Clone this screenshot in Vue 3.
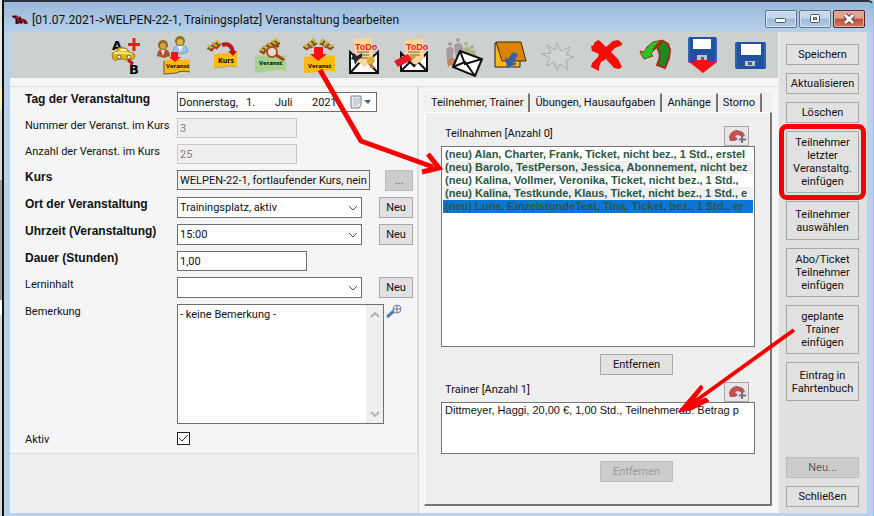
<script setup>
import { ref } from 'vue'

const kurs = ref('WELPEN-22-1, fortlaufender Kurs, nein')
const bemerkung = ref('- keine Bemerkung -')
const aktiv = ref(true)
const activeTab = ref(0)
const selected = ref(4)

const tabs = ['Teilnehmer, Trainer', 'Übungen, Hausaufgaben', 'Anhänge', 'Storno']

const teilnahmen = [
  '(neu) Alan, Charter, Frank, Ticket, nicht bez., 1 Std., erstel',
  '(neu) Barolo, TestPerson, Jessica, Abonnement, nicht bez',
  '(neu) Kalina, Vollmer, Veronika, Ticket, nicht bez., 1 Std.,',
  '(neu) Kalina, Testkunde, Klaus, Ticket, nicht bez., 1 Std., e',
  '(neu) Luna, EinzelstundeTest, Tina, Ticket, bez., 1 Std., er'
]
const trainer = ['Dittmeyer, Haggi, 20,00 €, 1,00 Std., Teilnehmerab. Betrag p']

const topActions = [
  ['Speichern'],
  ['Aktualisieren'],
  ['Löschen'],
  ['Teilnehmer', 'letzter', 'Veranstaltg.', 'einfügen'],
  ['Teilnehmer', 'auswählen'],
  ['Abo/Ticket', 'Teilnehmer', 'einfügen'],
  ['geplante', 'Trainer', 'einfügen'],
  ['Eintrag in', 'Fahrtenbuch']
]
</script>

<template>
  <div class="desktop">
    <div class="behind"></div>
    <div class="window">
      <header class="titlebar">
        <svg class="app-icon" width="17" height="12" viewBox="0 0 17 12">
          <path d="M1 2l3-1 3 2 2-1v2l3 1 2 1 2 3-1 1h-3l-1-2-1 2H9L8 8l-1 2H3l2-3-2-3z" fill="#8d1d20" />
          <path d="M0 2l4 1-2 1zM4 5l2 4H4zM8 4l1 5H8zM12 6l2 3" fill="#300b10" stroke="#300b10" />
        </svg>
        <h1>[01.07.2021-&gt;WELPEN-22-1, Trainingsplatz] Veranstaltung bearbeiten</h1>
        <div class="caption-buttons">
          <button type="button" aria-label="Minimieren">
            <svg width="30" height="16" viewBox="0 0 30 16"><rect x="9.500" y="7.500" width="10" height="4" rx="1" fill="#fff" stroke="#4d5a6c" /></svg>
          </button>
          <button type="button" aria-label="Maximieren">
            <svg width="30" height="16" viewBox="0 0 30 16"><rect x="10.500" y="3.500" width="9" height="8" rx="1" fill="#fff" stroke="#4d5a6c" /><rect x="13.500" y="6.500" width="3" height="2" fill="#9bb5d2" stroke="#4d5a6c" /></svg>
          </button>
          <button type="button" class="close" aria-label="Fenster schließen">
            <svg width="30" height="16" viewBox="0 0 30 16"><path d="M11 4l8 8M19 4l-8 8" stroke="#5a3b40" stroke-width="5" /><path d="M11 4l8 8M19 4l-8 8" stroke="#fff" stroke-width="3" /></svg>
          </button>
        </div>
      </header>

      <div class="client">
        <div class="workspace">
          <nav class="toolbar" aria-label="Werkzeuge">
            <button type="button" aria-label="Fahrt von A nach B">
              <svg viewBox="0 0 48 46">
                <text x="10" y="18" class="ab">A</text>
                <path d="M32 6v13M26 12.500h12" stroke="#f11a1a" stroke-width="3" />
                <path d="M10 23q0-3 4-3l2-4q5-2 9 1l2 3q5 0 6 4l-1 2q-2 3-5 1-3 2-6 0h-4q-4 3-6 0z" fill="#e0b526" stroke="#9b7412" />
                <path d="M17 19l2-2h5l1 2z" fill="#fff4b4" />
                <path d="M12 21q8-1 18 1" stroke="#fae670" stroke-width="2" fill="none" />
                <circle cx="17" cy="25" r="2" fill="#f7efc0" stroke="#7c6420" /><circle cx="27" cy="25" r="2" fill="#f7efc0" stroke="#7c6420" />
                <path d="M26 28l4 3-1 2" stroke="#b51818" stroke-width="3" fill="none" />
                <text x="27" y="42" class="ab">B</text>
              </svg>
            </button>
            <button type="button" aria-label="Teilnehmer zur Veranstaltung">
              <svg viewBox="0 0 48 46">
                <path d="M7 24q0-7 6-7 7 0 7 7l-6 2z" fill="#a9532f" />
                <circle cx="13" cy="13" r="5" fill="#8d6b20" /><circle cx="13" cy="14" r="3" fill="#dba43c" />
                <path d="M11 18l2 6 2-6z" fill="#e8e4e0" />
                <path d="M23 20q0-7 7-7 8 0 8 7l-7 2z" fill="#9dc0ea" stroke="#7aa0d4" />
                <circle cx="30" cy="9" r="5" fill="#8d7322" /><circle cx="30" cy="10" r="3" fill="#e5b84b" />
                <path d="M28 14l2 6 3-6z" fill="#fff" />
                <path d="M14 28l13-1 6 1 7-1v13q-6-1-13 1l-13 1z" fill="#fdb913" />
                <path d="M14 29v13l12-1q5-3 14-1" fill="none" stroke="#605c38" />
                <path d="M21 20h7v5h3l-6 5-6-5h2z" fill="#fb1010" />
                <text x="16" y="36" class="tiny">Veranst</text>
              </svg>
            </button>
            <button type="button" aria-label="Gruppe zum Kurs">
              <svg viewBox="0 0 48 46">
                <path d="M10 15l5 3M14 12l6 4M18 10l4 4" stroke="#6e5a22" stroke-width="4" />
                <path d="M10 14l5 3M14 11l6 4M18 8l4 4" stroke="#dcb232" stroke-width="2" />
                <path d="M13 18l3-2M18 16l3-2" stroke="#c22727" stroke-width="2" />
                <path d="M16 22l12-1 11-1v15q-5-2-12 0l-11 1z" fill="#fdbb14" />
                <path d="M16 36l11-1q6-2 12 0" stroke="#b4a66e" fill="none" />
                <path d="M24 13q9-3 11 7" fill="none" stroke="#c31719" stroke-width="4" />
                <path d="M30 19h9l-4 5z" fill="#b80f12" />
                <text x="20" y="31" class="small">Kurs</text>
              </svg>
            </button>
            <button type="button" aria-label="Veranstaltung suchen">
              <svg viewBox="0 0 48 46">
                <path d="M9 23q12 1 31 0v16q-7-2-15 0l-16 2z" fill="#a9d18d" />
                <path d="M14 18l5 3M17 15l5 4M21 12l5 5M25 10l5 5M29 8l4 5" stroke="#6e5a22" stroke-width="4" />
                <path d="M14 17l4 2M17 14l5 3M21 11l5 3M25 9l5 3M29 7l4 3" stroke="#dcb232" stroke-width="2" />
                <path d="M16 21l3-1M30 15l3-1" stroke="#cb2b27" stroke-width="2" />
                <circle cx="26" cy="20" r="5" fill="#e8ddd0" stroke="#b34e20" stroke-width="2" />
                <path d="M30 23l8 5" stroke="#aa4219" stroke-width="3" />
                <text x="13" y="33" class="tiny">Veranst</text>
              </svg>
            </button>
            <button type="button" aria-label="Gruppen zur Veranstaltung">
              <svg viewBox="0 0 48 46">
                <path d="M10 25q14-2 31-1v16q-7-3-16 0l-15 1z" fill="#fdba12" />
                <path d="M10 14l4 3M14 11l5 4M18 8l4 5M39 14l-4 3M35 11l-5 4M30 8l-3 5" stroke="#6e5a22" stroke-width="4" />
                <path d="M10 13l4 3M14 10l5 4M18 7l4 4M39 13l-4 3M35 10l-5 4M30 7l-3 4" stroke="#dcb232" stroke-width="2" />
                <path d="M13 17l3-2M36 17l-3-2" stroke="#c22727" stroke-width="2" />
                <path d="M20 15h9v7h4l-9 7-8-7h4z" fill="#fb0f0f" />
                <text x="14" y="36" class="tiny">Veranst</text>
              </svg>
            </button>
            <button type="button" aria-label="ToDo bearbeiten">
              <svg viewBox="0 0 48 46">
                <path d="M8 20l14 13 14-13v21H8z" fill="#fff" stroke="#111" stroke-width="2" />
                <path d="M8 41l11-12M36 41L25 29" stroke="#111" stroke-width="2" />
                <path d="M12 7l18-1 1 22-8 7-11-8z" fill="#fad798" />
                <path d="M15 20h12M17 23h10M18 26h8" stroke="#6d6251" />
                <path d="M12 21l3 3 5-3v4l-4 3-3 5-1-5-3-1z" fill="#202736" />
                <path d="M25 26l6-2 2 5-3 5-5-3z" fill="#dbac36" /><path d="M29 32l5 4h-6z" fill="#d26b35" />
                <text x="13" y="18" class="todo">ToDo</text>
              </svg>
            </button>
            <button type="button" aria-label="ToDo abstempeln">
              <svg viewBox="0 0 48 46">
                <path d="M11 21l13 13 13-13v18H11z" fill="#fff" stroke="#111" stroke-width="2" />
                <path d="M11 39l10-10M37 39L27 29" stroke="#111" stroke-width="2" />
                <path d="M15 8l18-1 1 19-8 7-11-8z" fill="#fad798" />
                <path d="M18 20h12M20 23h10" stroke="#6d6251" />
                <path d="M18 24l5-2 3 3-5 4z" fill="#c89c3d" />
                <path d="M4 29l14-7 4 6-14 7z" fill="#e71924" />
                <text x="16" y="18" class="todo">ToDo</text>
              </svg>
            </button>
            <button type="button" aria-label="Nachricht an Gruppe">
              <svg viewBox="0 0 48 46">
                <g fill="#a99b9f"><circle cx="12" cy="12" r="2" /><path d="M8 17l3-2h3l2 3-1 5v6H9z" /><circle cx="20" cy="8" r="2" /><path d="M16 13l3-2h3l3 3-1 13h-6z" /></g>
                <g fill="#acb38a"><circle cx="28" cy="12" r="2" /><path d="M25 17l2-2h4l2 3-1 7h-7z" /><circle cx="34" cy="15" r="2" /><path d="M30 20l3-2h4l2 9h-9z" /></g>
                <path d="M9 28l5-2 5 2-2 6-4-1-3 2z" fill="#ca8157" />
                <path d="M22 19l22 8-7 17-22-9z" fill="#fff" stroke="#111" stroke-width="2" />
                <path d="M22 19l5 13 17-5M15 35l12-5 10 14" fill="none" stroke="#111" stroke-width="2" />
              </svg>
            </button>
            <button type="button" aria-label="Auswahl übernehmen">
              <svg viewBox="0 0 48 46">
                <path d="M9 11h25v24H9z" fill="#fdbc14" stroke="#26221b" />
                <path d="M10 10h25l5 19H16z" fill="#dc8400" stroke="#3d2b10" />
                <path d="M27 20l5 2-4 8 3 2-10 4-2-11 3 2z" fill="#385fa9" />
              </svg>
            </button>
            <button type="button" aria-label="Neu">
              <svg viewBox="0 0 48 46">
                <path d="M23 11l4 8 9-4-4 8 8 2-8 3 2 10-8-6-3 6-3-8-8 4 4-8-8-4 9-1-4-8 8 5z" fill="#d0d4d3" stroke="#a8abab" />
              </svg>
            </button>
            <button type="button" aria-label="Löschen">
              <svg viewBox="0 0 48 46">
                <path d="M9 14l3-1v-2l4-3 2 1 6 6 7-6 5-1 4 3v2l-7 3-4 4 7 7 4 8-3 2-5-1-8-9-5 3-2 5v4l-8-4 1-4 6-6 1-3-7-3z" fill="#fb0905" />
              </svg>
            </button>
            <button type="button" aria-label="Rückgängig">
              <svg viewBox="0 0 48 46">
                <path d="M10 19l4 1 3-5 6-5 10-2-3 5-7 6-2 3 2 2-9 3-3-5z" fill="#18ce1b" stroke="#a62c16" stroke-width="1" />
                <path d="M27 15l6-6 5 3 2 6-1 8-4 10-8-3q4-8 2-13z" fill="#188b22" stroke="#a62c16" stroke-width="2" />
                <path d="M32 9l-4 3-5 6" fill="none" stroke="#a62c16" stroke-width="2" />
              </svg>
            </button>
            <button type="button" aria-label="Speichern und schließen">
              <svg viewBox="0 0 48 46">
                <rect x="10" y="5" width="29" height="26" rx="2" fill="#21519f" />
                <path d="M11 6v24M38 6v24" stroke="#397ac1" />
                <path d="M15 7h18v10H15z" fill="#fff" />
                <path d="M19 23h10v6H19z" fill="#b9c5d1" /><path d="M23 25h3v3h-3z" fill="#476583" />
                <path d="M18 28h12v2h9L25 41 11 30h7z" fill="#fb100c" />
              </svg>
            </button>
            <button type="button" aria-label="Speichern">
              <svg viewBox="0 0 48 46">
                <rect x="9" y="10" width="31" height="27" rx="2" fill="#21519f" />
                <path d="M10 12v23M39 12v23" stroke="#397ac1" />
                <path d="M15 12h20v11H15z" fill="#fff" />
                <path d="M19 29h10v5H19z" fill="#b9c5d1" /><path d="M22 30h4v3h-4z" fill="#476583" />
              </svg>
            </button>
          </nav>

          <div class="columns">
            <section class="details">
              <form class="form" @submit.prevent>
                <div class="row">
                  <label for="tag" class="strong">Tag der Veranstaltung</label>
                  <div class="date">
                    <span class="weekday">Donnerstag,</span>
                    <input id="tag" class="day" value="1." />
                    <input class="month" value="Juli" aria-label="Monat" />
                    <input class="year" value="2021" aria-label="Jahr" />
                    <button type="button" aria-label="Kalender öffnen">
                      <svg width="21" height="14" viewBox="0 0 21 14">
                        <path d="M1 1h10v9l-2 3H1z" fill="#e9eef4" stroke="#7b7b7b" />
                        <path d="M3 4h7M3 6h7M3 8h7M3 10h5" stroke="#a9b7c7" />
                        <path d="M14 5h7l-3 4z" fill="#43617f" />
                      </svg>
                    </button>
                  </div>
                </div>
                <div class="row">
                  <label for="nummer">Nummer der Veranst. im Kurs</label>
                  <input id="nummer" class="box short" value="3" disabled />
                </div>
                <div class="row">
                  <label for="anzahl">Anzahl der Veranst. im Kurs</label>
                  <input id="anzahl" class="box short" value="25" disabled />
                </div>
                <div class="row">
                  <label for="kurs" class="strong">Kurs</label>
                  <input id="kurs" v-model="kurs" class="box course" readonly />
                  <button type="button" class="btn more" disabled aria-label="Kurs wählen">...</button>
                </div>
                <div class="row">
                  <label for="ort" class="strong">Ort der Veranstaltung</label>
                  <div class="combo">
                    <select id="ort"><option>Trainingsplatz, aktiv</option></select>
                    <svg width="10" height="6" viewBox="0 0 10 6"><path d="M1 1l4 4 4-4" /></svg>
                  </div>
                  <button type="button" class="btn new">Neu</button>
                </div>
                <div class="row">
                  <label for="zeit" class="strong">Uhrzeit (Veranstaltung)</label>
                  <div class="combo">
                    <select id="zeit"><option>15:00</option></select>
                    <svg width="10" height="6" viewBox="0 0 10 6"><path d="M1 1l4 4 4-4" /></svg>
                  </div>
                  <button type="button" class="btn new">Neu</button>
                </div>
                <div class="row">
                  <label for="dauer" class="strong">Dauer (Stunden)</label>
                  <input id="dauer" class="box duration" value="1,00" />
                </div>
                <div class="row">
                  <label for="inhalt">Lerninhalt</label>
                  <div class="combo">
                    <select id="inhalt"><option></option></select>
                    <svg width="10" height="6" viewBox="0 0 10 6"><path d="M1 1l4 4 4-4" /></svg>
                  </div>
                  <button type="button" class="btn new">Neu</button>
                </div>
                <div class="row">
                  <label for="bemerkung">Bemerkung</label>
                  <div class="note">
                    <textarea id="bemerkung" v-model="bemerkung"></textarea>
                    <div class="scroll">
                      <svg width="10" height="6" viewBox="0 0 10 6"><path d="M1 5l4-4 4 4" /></svg>
                      <svg width="10" height="6" viewBox="0 0 10 6"><path d="M1 1l4 4 4-4" /></svg>
                    </div>
                  </div>
                  <button type="button" class="lens" aria-label="Bemerkung vergrößern">
                    <svg width="16" height="15" viewBox="0 0 16 15">
                      <path d="M1 13l7-6" stroke="#5580ae" stroke-width="3" />
                      <circle cx="11" cy="5" r="4" fill="#e8eef6" stroke="#7389ac" />
                      <path d="M11 1v8M7 5h8" stroke="#8b7597" />
                    </svg>
                  </button>
                </div>
                <div class="row last">
                  <label for="aktiv">Aktiv</label>
                  <span class="check">
                    <input id="aktiv" v-model="aktiv" type="checkbox" />
                    <svg v-if="aktiv" width="13" height="13" viewBox="0 0 13 13"><path d="M2 6l3 3 6-6" /></svg>
                  </span>
                </div>
              </form>
            </section>

            <section class="people">
              <div class="tabs" role="tablist">
                <button
                  v-for="(t, i) in tabs"
                  :key="t"
                  type="button"
                  role="tab"
                  :aria-selected="activeTab === i"
                  :class="{ active: activeTab === i }"
                  @click="activeTab = i"
                >{{ t }}</button>
              </div>
              <div class="panel" role="tabpanel">
                <div class="list-head">
                  <h2 id="teilnahmen-titel">Teilnahmen [Anzahl 0]</h2>
                  <button type="button" aria-label="Teilnahme hinzufügen">
                    <svg width="20" height="16" viewBox="0 0 20 16">
                      <path d="M3 13l-1-4q1-6 8-7l6 2 2 4-3 1-4-2-3 1 3 3-3 2z" fill="#c05352" /><path d="M15 8v7M12 11.500h7" stroke="#777" stroke-width="2" />
                    </svg>
                  </button>
                </div>
                <ul class="list tall" role="listbox" aria-labelledby="teilnahmen-titel">
                  <li
                    v-for="(p, i) in teilnahmen"
                    :key="p"
                    role="option"
                    :aria-selected="selected === i"
                    :class="{ selected: selected === i }"
                    @click="selected = i"
                  >{{ p }}</li>
                </ul>
                <button type="button" class="btn remove">Entfernen</button>
                <div class="list-head">
                  <h2 id="trainer-titel">Trainer [Anzahl 1]</h2>
                  <button type="button" aria-label="Trainer hinzufügen">
                    <svg width="20" height="16" viewBox="0 0 20 16">
                      <path d="M3 13l-1-4q1-6 8-7l6 2 2 4-3 1-4-2-3 1 3 3-3 2z" fill="#c05352" /><path d="M15 8v7M12 11.500h7" stroke="#777" stroke-width="2" />
                    </svg>
                  </button>
                </div>
                <ul class="list plain" role="listbox" aria-labelledby="trainer-titel">
                  <li v-for="t in trainer" :key="t" role="option">{{ t }}</li>
                </ul>
                <button type="button" class="btn remove" disabled>Entfernen</button>
              </div>
            </section>
          </div>
        </div>

        <aside class="actions">
          <button v-for="(a, i) in topActions" :key="i" type="button" class="btn" :class="{ marked: i === 3, multi: a.length > 1 }">
            <span v-for="line in a" :key="line">{{ line }}</span>
          </button>
          <button type="button" class="btn bottom" disabled>Neu...</button>
          <button type="button" class="btn">Schließen</button>
        </aside>
      </div>
    </div>

    <svg class="arrows" width="874" height="516" viewBox="0 0 874 516" aria-hidden="true">
      <g fill="none" stroke="#f80000">
        <path d="M320 70l41 71 72 26" stroke-width="5" />
        <path d="M428 154l11 14-17 4" stroke-width="5" />
        <path d="M794 330L690 405" stroke-width="4" />
      </g>
      <path d="M678 412l23-27 2 3-12 16 15-6 3 3-18 9z" fill="#f80000" stroke="#f80000" />
    </svg>
  </div>
</template>

<style>
body {
  background: #b9d1ea;
}
</style>

<style scoped>
.desktop {
  --sans: Roboto, "Liberation Sans", Arial, sans-serif;
  --wide: "Liberation Sans", Arial, sans-serif;
  position: relative;
  display: flex;
  min-height: 100vh;
  font: 11px/15px var(--sans);
  color: #111;
}
*,
*::before {
  box-sizing: border-box;
}
button,
input,
select,
textarea {
  font: inherit;
  color: inherit;
  margin: 0;
  padding: 0;
  border-radius: 0;
}
h1,
h2,
ul {
  margin: 0;
  padding: 0;
  font: inherit;
  list-style: none;
}
.behind {
  width: 4px;
  border-right: 2px solid #111;
  background: linear-gradient(#e8e8e8 88px, #f7f3a0 88px 110px, #d8d8d8 110px 180px, #9c9c9c 180px 300px, #fff 300px 315px, #d8d8d8 315px);
}
.window {
  flex: 1;
  min-width: 0;
  display: flex;
  flex-direction: column;
  padding: 0 6px 3px 6px;
  border-top: 2px solid #2d333d;
  border-right: 1px solid #5fd0f0;
  border-top-right-radius: 6px;
  background: linear-gradient(#9ab8da, #b9d1ea 32px);
}
.titlebar {
  display: flex;
  align-items: flex-start;
  height: 30px;
  padding: 8px 2px 0 2px;
}
.app-icon {
  margin-top: 4px;
}
.titlebar h1 {
  margin-left: 3px;
  font: 12px/20px Roboto, "Noto Sans", sans-serif;
  white-space: nowrap;
}
.caption-buttons {
  display: flex;
  gap: 2px;
  margin-left: auto;
}
.caption-buttons button {
  width: 32px;
  height: 18px;
  border: 1px solid #5f7691;
  border-radius: 2px;
  background: linear-gradient(#c5d7ea 45%, #9fb9d6 50%, #b7cee6);
  box-shadow: inset 0 0 0 1px #d5e3f1;
}
.caption-buttons .close {
  border-color: #5c2320;
  background: linear-gradient(#e2a093 45%, #c14b35 50%, #d07a63);
  box-shadow: inset 0 0 0 1px #e5b0a4;
}
.caption-buttons svg {
  display: block;
}
.client {
  flex: 1;
  display: flex;
  background: #f5f5f5;
}
.workspace {
  flex: 1;
  min-width: 0;
  display: flex;
  flex-direction: column;
}
.toolbar {
  display: flex;
  justify-content: flex-end;
  height: 46px;
  padding-right: 4px;
  background: #ccd1d0;
}
.toolbar button {
  width: 48px;
  border: 0;
  background: none;
}
.toolbar svg {
  display: block;
  width: 48px;
  height: 46px;
}
.ab {
  font: 900 13px "DejaVu Sans", sans-serif;
}
.tiny {
  font: bold 6px "Open Sans", sans-serif;
}
.small {
  font: bold 7px "Open Sans", sans-serif;
}
.todo {
  font: bold 9px "Liberation Sans", sans-serif;
  fill: #f01515;
}
.columns {
  flex: 1;
  display: flex;
  margin-top: 8px;
  border-top: 1px solid #dcdcdc;
}
.details {
  flex: 1;
  background: #efefef;
}
.form {
  display: flex;
  flex-direction: column;
  gap: 6px;
  padding: 5px 4px 6px 15px;
  border-right: 1px solid #dcdcdc;
  border-bottom: 1px solid #dcdcdc;
  background: #f5f5f5;
}
.row {
  display: flex;
  align-items: flex-start;
}
.row label {
  flex: none;
  width: 152px;
  white-space: nowrap;
}
.row .strong {
  font: bold 12px/15px var(--wide);
}
.row > .btn {
  margin-left: auto;
}
.last {
  padding-top: 2px;
}
.box,
.date {
  height: 20px;
  border: 1px solid #6e6e6e;
  background: #fff;
}
.box {
  padding: 0 2px;
}
.box:disabled {
  border-color: #c8c8c8;
  background: #efefef;
  color: #808080;
}
.box:read-only:not(:disabled) {
  background: #f0f0f0;
}
.short {
  width: 120px;
}
.course {
  width: 193px;
}
.duration {
  width: 130px;
}
.date {
  display: flex;
  align-items: center;
  width: 200px;
  padding-left: 1px;
}
.date input {
  border: 0;
  background: none;
}
.weekday {
  width: 67px;
}
.day {
  width: 29px;
}
.month {
  width: 37px;
}
.year {
  width: 38px;
}
.date button {
  display: flex;
  border: 0;
  background: none;
}
.combo {
  position: relative;
  width: 185px;
}
.combo select {
  display: block;
  width: 100%;
  height: 21px;
  padding: 0 20px 0 2px;
  border: 1px solid #6e6e6e;
  background: #fff;
  appearance: none;
}
.combo svg {
  position: absolute;
  right: 4px;
  top: 8px;
  pointer-events: none;
}
.combo path,
.scroll path {
  fill: none;
  stroke: #505050;
}
.btn {
  height: 21px;
  border: 1px solid #a8a8a8;
  background: #e1e1e1;
  text-align: center;
}
.btn:disabled {
  border-color: #bdbdbd;
  background: #cccccc;
  color: #5e5e5e;
}
.new {
  width: 34px;
}
.more {
  width: 28px;
}
.note {
  display: flex;
  width: 207px;
  height: 120px;
  border: 1px solid #6e6e6e;
  background: #fff;
}
.note textarea {
  flex: 1;
  min-width: 0;
  padding: 2px;
  border: 0;
  background: none;
  resize: none;
}
.scroll {
  display: flex;
  flex-direction: column;
  justify-content: space-between;
  align-items: center;
  width: 17px;
  padding: 7px 0 6px;
  background: #efefef;
}
.scroll path {
  stroke: #b4b4b4;
  stroke-width: 2;
}
.lens {
  display: flex;
  margin-left: 2px;
  border: 0;
  background: none;
}
.check {
  position: relative;
  display: flex;
}
.check input {
  width: 13px;
  height: 13px;
  border: 1px solid #222;
  background: #fff;
  appearance: none;
}
.check svg {
  position: absolute;
  inset: 0;
  pointer-events: none;
}
.check path {
  fill: none;
  stroke: #333;
}
.people {
  display: flex;
  flex-direction: column;
  width: 360px;
  padding: 5px 6px 7px 5px;
  border-left: 1px solid #dcdcdc;
}
.tabs {
  display: flex;
  height: 20px;
  padding: 1px 0 0 2px;
  background: #efefef;
}
.tabs button {
  padding: 0 5px;
  border: 0;
  border-top: 1px solid #fff;
  border-right: 2px solid #777;
  background: #f0f0f0;
  line-height: 18px;
  white-space: nowrap;
}
.panel {
  flex: 1;
  display: flex;
  flex-direction: column;
  padding: 13px 15px 22px 16px;
  border: 1px solid #fff;
  border-right: 2px solid #777;
  border-bottom: 2px solid #777;
  background: #efefef;
}
.list-head {
  display: flex;
  justify-content: space-between;
  height: 20px;
  padding: 0 6px 0 4px;
}
.list-head button {
  display: flex;
  justify-content: center;
  width: 25px;
  height: 20px;
  padding-top: 1px;
  border: 1px solid #a8a8a8;
  background: #e6e6e6;
}
.list {
  height: 52px;
  padding: 1px;
  border: 1px solid #767676;
  background: #fff;
  overflow: hidden;
}
.tall {
  flex: 1;
}
.list li {
  padding-left: 2px;
  font: bold 11px/13px var(--wide);
  color: #2a5747;
  white-space: nowrap;
  overflow: hidden;
}
.list li:nth-child(even) {
  background: #efefef;
}
.list .selected,
.list .selected:nth-child(odd) {
  background: #0a77d6;
}
.plain li {
  font: 11px/13px var(--wide);
  color: #111;
}
.remove {
  width: 73px;
  margin: 7px 0 7px 159px;
}
.remove:disabled {
  margin-bottom: 0;
  color: #9a9a9a;
}
.actions {
  display: flex;
  flex-direction: column;
  gap: 8px;
  width: 89px;
  padding: 12px 8px 6px 7px;
  border-left: 1px solid #eee;
  background: #e0e0e0;
}
.actions .btn {
  display: flex;
  flex-direction: column;
  align-items: center;
  justify-content: center;
  line-height: 13px;
}
.actions .multi {
  height: auto;
  min-height: 39px;
  padding: 4px 0;
}
.actions .marked {
  outline: 5px solid #f40000;
  outline-offset: 2px;
  border-radius: 1px;
}
.actions .bottom {
  margin-top: auto;
}
.arrows {
  position: absolute;
  left: 0;
  top: 0;
  pointer-events: none;
}
</style>
